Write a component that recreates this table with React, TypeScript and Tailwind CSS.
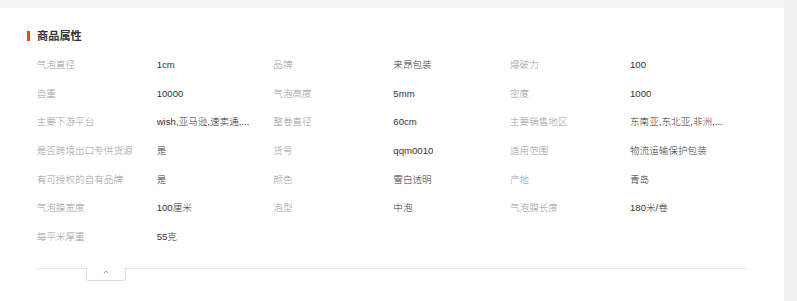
const rows: [string, string, string, string, string, string][] = [
  ["气泡直径", "1cm", "品牌", "来昂包装", "爆破力", "100"],
  ["自重", "10000", "气泡高度", "5mm", "密度", "1000"],
  ["主要下游平台", "wish,亚马逊,速卖通,...", "整卷直径", "60cm", "主要销售地区", "东南亚,东北亚,非洲,..."],
  ["是否跨境出口专供货源", "是", "货号", "qqm0010", "适用范围", "物流运输保护包装"],
  ["有可授权的自有品牌", "是", "颜色", "雪白透明", "产地", "青岛"],
  ["气泡膜宽度", "100厘米", "泡型", "中泡", "气泡膜长度", "180米/卷"],
  ["每平米厚重", "55克", "", "", "", ""],
];

function Pair({ label, value }: { label: string; value: string }) {
  return (
    <div className="flex w-1/3 items-center">
      <span className="w-[120px] shrink-0 text-[#9a9a9a]">{label}</span>
      <span className="truncate text-[#333]">{value}</span>
    </div>
  );
}

export default function App() {
  return (
    <div
      className="flex h-[301px] w-[797px] overflow-hidden bg-white text-[9.6px] font-light leading-[12px]"
      style={{ fontFamily: '"Liberation Sans", "Noto Sans CJK SC", sans-serif' }}
    >
      <div className="flex w-[784px] flex-col">
        <div className="h-[8px] bg-[#f5f5f5]" />
        <div className="flex flex-col pt-[20px]">
          <div className="flex h-4 items-center pl-[27px]">
            <span className="h-[10px] w-[3px] bg-[#ff4400]" />
            <span className="ml-[7px] text-[11.2px] font-bold text-[#333]">商品属性</span>
          </div>
          <div className="ml-[36.7px] mt-[6.6px] w-[710px]">
            {rows.map((r, i) => (
              <div key={i} className="flex h-[28.7px] items-center">
                <Pair label={r[0]} value={r[1]} />
                <Pair label={r[2]} value={r[3]} />
                <Pair label={r[4]} value={r[5]} />
              </div>
            ))}
          </div>
          <div className="ml-[36px] mt-[16.5px] flex w-[710.7px] items-start">
            <div className="w-[50.3px] border-t border-[#e5e5e5]" />
            <div className="flex h-[12.7px] w-[39.4px] items-center justify-center rounded-b-[3px] border-x border-b border-[#ddd] pb-[3px]">
              <svg width="6" height="4" viewBox="0 0 6 4" fill="none">
                <polyline points="0.8,3.2 3,1 5.2,3.2" stroke="#999" strokeWidth="1" />
              </svg>
            </div>
            <div className="flex-1 border-t border-[#e5e5e5]" />
          </div>
        </div>
      </div>
      <div className="w-[13px] bg-[#f0f0f0]" />
    </div>
  );
}
